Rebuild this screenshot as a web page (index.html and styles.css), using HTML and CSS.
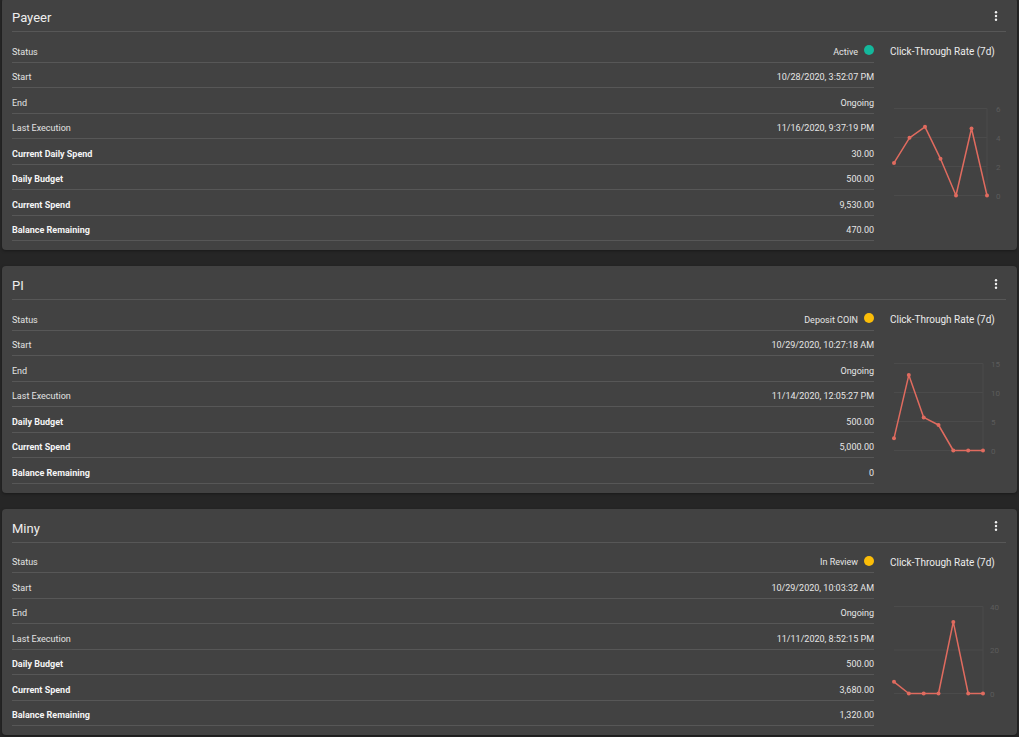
FILE: index.html
```html
<!DOCTYPE html>
<html lang="en">

<head>
    <meta charset="UTF-8">
    <meta name="viewport" content="width=device-width, initial-scale=1.0">
    <title>Campaigns</title>
    <link rel="stylesheet" href="styles.css">
</head>

<body>
    <div class="page">

        <div class="card">
            <div class="card-header">
                <span class="card-title">Payeer</span>
                <button class="menu-btn">
                    <svg width="4" height="10" viewBox="0 0 4 10"><circle cx="2" cy="1.2" r="1.2"/><circle cx="2" cy="5" r="1.2"/><circle cx="2" cy="8.8" r="1.2"/></svg>
                </button>
            </div>
            <div class="card-body">
                <div class="rows">
                    <div class="row"><span class="label">Status</span><span class="value">Active <i class="dot dot-active"></i></span></div>
                    <div class="row"><span class="label">Start</span><span class="value">10/28/2020, 3:52:07 PM</span></div>
                    <div class="row"><span class="label">End</span><span class="value">Ongoing</span></div>
                    <div class="row"><span class="label">Last Execution</span><span class="value">11/16/2020, 9:37:19 PM</span></div>
                    <div class="row"><span class="label strong">Current Daily Spend</span><span class="value">30.00</span></div>
                    <div class="row"><span class="label strong">Daily Budget</span><span class="value">500.00</span></div>
                    <div class="row"><span class="label strong">Current Spend</span><span class="value">9,530.00</span></div>
                    <div class="row"><span class="label strong">Balance Remaining</span><span class="value">470.00</span></div>
                </div>
                <div class="chart">
                    <div class="chart-title">Click-Through Rate (7d)</div>
                    <div class="chart-area">
                        <svg width="116" height="100" viewBox="0 0 116 100">
                            <g class="grid">
                                <line x1="4" y1="6.5" x2="97" y2="6.5"/>
                                <line x1="4" y1="35.5" x2="97" y2="35.5"/>
                                <line x1="4" y1="64.5" x2="97" y2="64.5"/>
                                <line x1="4" y1="93.5" x2="97" y2="93.5"/>
                                <line x1="97" y1="6.5" x2="97" y2="93.5"/>
                            </g>
                            <g class="ticks">
                                <text x="106" y="9.5">6</text>
                                <text x="106" y="38.5">4</text>
                                <text x="106" y="67.5">2</text>
                                <text x="106" y="96.5">0</text>
                            </g>
                            <polyline class="series" points="4,60.9 19.5,35.8 35,24.8 50.5,56.8 66,93.5 81.5,26.5 97,93.5"/>
                            <g class="points">
                                <circle cx="4" cy="60.9" r="2"/><circle cx="19.5" cy="35.8" r="2"/><circle cx="35" cy="24.8" r="2"/><circle cx="50.5" cy="56.8" r="2"/><circle cx="66" cy="93.5" r="2"/><circle cx="81.5" cy="26.5" r="2"/><circle cx="97" cy="93.5" r="2"/>
                            </g>
                        </svg>
                    </div>
                </div>
            </div>
        </div>

        <div class="card">
            <div class="card-header">
                <span class="card-title">PI</span>
                <button class="menu-btn">
                    <svg width="4" height="10" viewBox="0 0 4 10"><circle cx="2" cy="1.2" r="1.2"/><circle cx="2" cy="5" r="1.2"/><circle cx="2" cy="8.8" r="1.2"/></svg>
                </button>
            </div>
            <div class="card-body">
                <div class="rows">
                    <div class="row"><span class="label">Status</span><span class="value">Deposit COIN <i class="dot dot-pending"></i></span></div>
                    <div class="row"><span class="label">Start</span><span class="value">10/29/2020, 10:27:18 AM</span></div>
                    <div class="row"><span class="label">End</span><span class="value">Ongoing</span></div>
                    <div class="row"><span class="label">Last Execution</span><span class="value">11/14/2020, 12:05:27 PM</span></div>
                    <div class="row"><span class="label strong">Daily Budget</span><span class="value">500.00</span></div>
                    <div class="row"><span class="label strong">Current Spend</span><span class="value">5,000.00</span></div>
                    <div class="row"><span class="label strong">Balance Remaining</span><span class="value">0</span></div>
                </div>
                <div class="chart">
                    <div class="chart-title">Click-Through Rate (7d)</div>
                    <div class="chart-area">
                        <svg width="116" height="100" viewBox="0 0 116 100">
                            <g class="grid">
                                <line x1="4" y1="6.5" x2="93" y2="6.5"/>
                                <line x1="4" y1="35.5" x2="93" y2="35.5"/>
                                <line x1="4" y1="64.5" x2="93" y2="64.5"/>
                                <line x1="4" y1="93.5" x2="93" y2="93.5"/>
                                <line x1="93" y1="6.5" x2="93" y2="93.5"/>
                            </g>
                            <g class="ticks">
                                <text x="101" y="9.5">15</text>
                                <text x="101" y="38.5">10</text>
                                <text x="101" y="67.5">5</text>
                                <text x="101" y="96.5">0</text>
                            </g>
                            <polyline class="series" points="4,81.3 18.8,18.1 33.7,60.4 48.5,68 63.3,93.5 78.2,93.5 93,93.5"/>
                            <g class="points">
                                <circle cx="4" cy="81.3" r="2"/><circle cx="18.8" cy="18.1" r="2"/><circle cx="33.7" cy="60.4" r="2"/><circle cx="48.5" cy="68" r="2"/><circle cx="63.3" cy="93.5" r="2"/><circle cx="78.2" cy="93.5" r="2"/><circle cx="93" cy="93.5" r="2"/>
                            </g>
                        </svg>
                    </div>
                </div>
            </div>
        </div>

        <div class="card">
            <div class="card-header">
                <span class="card-title">Miny</span>
                <button class="menu-btn">
                    <svg width="4" height="10" viewBox="0 0 4 10"><circle cx="2" cy="1.2" r="1.2"/><circle cx="2" cy="5" r="1.2"/><circle cx="2" cy="8.8" r="1.2"/></svg>
                </button>
            </div>
            <div class="card-body">
                <div class="rows">
                    <div class="row"><span class="label">Status</span><span class="value">In Review <i class="dot dot-pending"></i></span></div>
                    <div class="row"><span class="label">Start</span><span class="value">10/29/2020, 10:03:32 AM</span></div>
                    <div class="row"><span class="label">End</span><span class="value">Ongoing</span></div>
                    <div class="row"><span class="label">Last Execution</span><span class="value">11/11/2020, 8:52:15 PM</span></div>
                    <div class="row"><span class="label strong">Daily Budget</span><span class="value">500.00</span></div>
                    <div class="row"><span class="label strong">Current Spend</span><span class="value">3,680.00</span></div>
                    <div class="row"><span class="label strong">Balance Remaining</span><span class="value">1,320.00</span></div>
                </div>
                <div class="chart">
                    <div class="chart-title">Click-Through Rate (7d)</div>
                    <div class="chart-area">
                        <svg width="116" height="100" viewBox="0 0 116 100">
                            <g class="grid">
                                <line x1="4" y1="6.5" x2="93" y2="6.5"/>
                                <line x1="4" y1="50" x2="93" y2="50"/>
                                <line x1="4" y1="93.5" x2="93" y2="93.5"/>
                                <line x1="93" y1="6.5" x2="93" y2="93.5"/>
                            </g>
                            <g class="ticks">
                                <text x="100" y="9.5">40</text>
                                <text x="100" y="53">20</text>
                                <text x="100" y="96.5">0</text>
                            </g>
                            <polyline class="series" points="4,81.8 18.8,93.5 33.7,93.5 48.5,93.5 63.3,21.9 78.2,93.5 93,93.5"/>
                            <g class="points">
                                <circle cx="4" cy="81.8" r="2"/><circle cx="18.8" cy="93.5" r="2"/><circle cx="33.7" cy="93.5" r="2"/><circle cx="48.5" cy="93.5" r="2"/><circle cx="63.3" cy="21.9" r="2"/><circle cx="78.2" cy="93.5" r="2"/><circle cx="93" cy="93.5" r="2"/>
                            </g>
                        </svg>
                    </div>
                </div>
            </div>
        </div>

    </div>
</body>

</html>
```

FILE: styles.css
```css
body {
    margin: 0;
    background-color: #262626;
    font-family: Roboto, "Liberation Sans", sans-serif;
    color: #e0e0e0;
}

.page {
    margin-top: -2px;
}

.card {
    background-color: #424242;
    border-radius: 4px;
    margin: 0 2px 16px 2px;
    padding: 0 11px 9px 10px;
    box-shadow: 0 1px 3px rgba(0, 0, 0, 0.35);
}

.card-header {
    display: flex;
    align-items: center;
    justify-content: space-between;
    height: 34px;
    box-sizing: border-box;
    padding-top: 2px;
    border-bottom: 1px solid #575757;
}

.card-title {
    font-size: 13px;
    padding-top: 4px;
    color: #eeeeee;
}

.menu-btn {
    width: 20px;
    height: 20px;
    padding: 0;
    border: none;
    background: none;
    display: flex;
    align-items: center;
    justify-content: center;
    cursor: pointer;
}

.menu-btn svg {
    fill: #f2f2f2;
}

.card-body {
    display: flex;
    margin-top: 5px;
}

.rows {
    flex: 1;
}

.row {
    display: flex;
    align-items: center;
    justify-content: space-between;
    height: 25.5px;
    box-sizing: border-box;
    padding-top: 5px;
    border-bottom: 1px solid #575757;
    font-size: 9px;
}

.label {
    color: #e2e2e2;
}

.label.strong {
    font-weight: bold;
    color: #f5f5f5;
}

.value {
    display: flex;
    align-items: center;
    gap: 6px;
    color: #e6e6e6;
}

.dot {
    display: inline-block;
    width: 10px;
    height: 10px;
    margin-top: -3px;
    border-radius: 50%;
}

.dot-active {
    background-color: #14b89c;
}

.dot-pending {
    background-color: #fbbd08;
}

.chart {
    width: 132px;
    box-sizing: border-box;
    padding-left: 16px;
    display: flex;
    flex-direction: column;
}

.chart-title {
    height: 25.5px;
    box-sizing: border-box;
    padding-top: 4px;
    display: flex;
    align-items: center;
    font-size: 10px;
    color: #ececec;
    white-space: nowrap;
}

.chart-area {
    flex: 1;
    display: flex;
    align-items: center;
}

.chart-area svg {
    display: block;
}

.grid line {
    stroke: #4b4b4b;
    stroke-width: 1;
}

.ticks text {
    font-family: Roboto, "Liberation Sans", sans-serif;
    font-size: 8px;
    fill: #5c5c5c;
}

.series {
    fill: none;
    stroke: #e06b5f;
    stroke-width: 1.5;
    stroke-linejoin: round;
}

.points circle {
    fill: #e06b5f;
}
```
